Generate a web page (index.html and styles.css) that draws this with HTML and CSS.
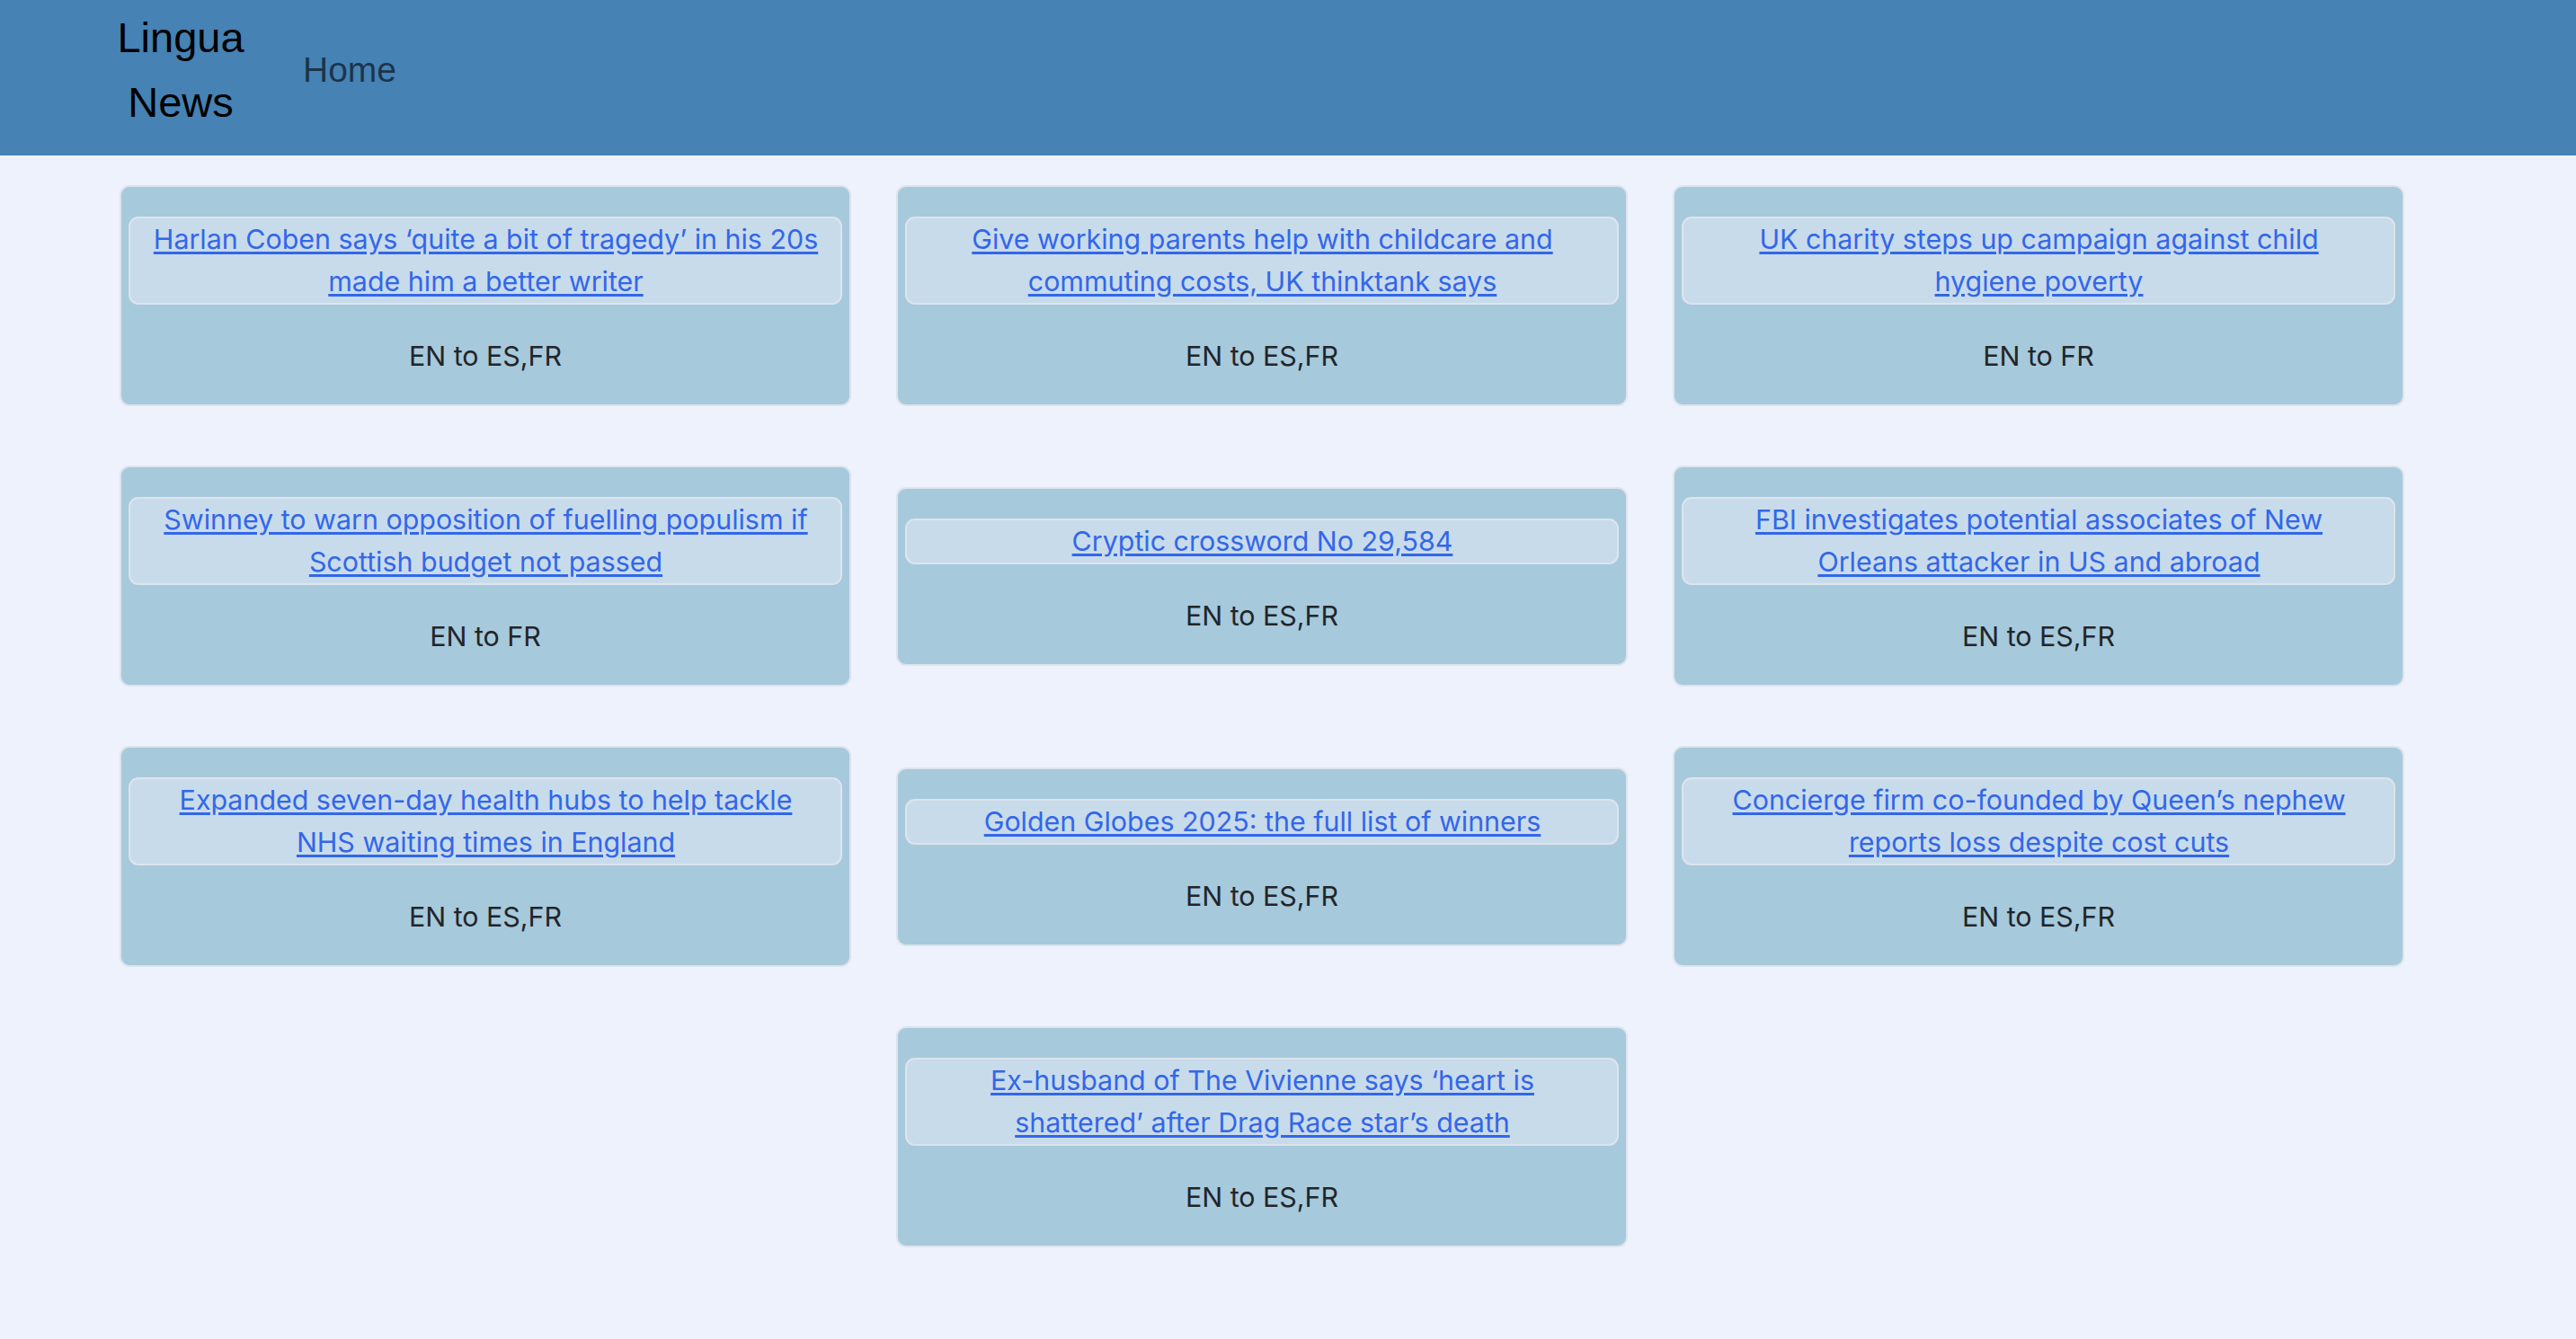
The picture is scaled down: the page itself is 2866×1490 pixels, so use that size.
FILE: index.html
```html
<!DOCTYPE html>
<html lang="en">
<head>
<meta charset="utf-8">
<title>Lingua News</title>
<link rel="stylesheet" href="styles.css">
</head>
<body>
<header class="topbar">
  <div class="brand">Lingua News</div>
  <nav class="nav"><a class="nav-link" href="#">Home</a></nav>
</header>
<main class="grid">
  <div class="card"><div class="title"><a href="#">Harlan Coben says ‘quite a bit of tragedy’ in his 20s made him a better writer</a></div><p class="langs">EN to ES,FR</p></div>
  <div class="card"><div class="title"><a href="#">Give working parents help with childcare and commuting costs, UK thinktank says</a></div><p class="langs">EN to ES,FR</p></div>
  <div class="card"><div class="title"><a href="#">UK charity steps up campaign against child hygiene poverty</a></div><p class="langs">EN to FR</p></div>
  <div class="card"><div class="title"><a href="#">Swinney to warn opposition of fuelling populism if Scottish budget not passed</a></div><p class="langs">EN to FR</p></div>
  <div class="card"><div class="title"><a href="#">Cryptic crossword No 29,584</a></div><p class="langs">EN to ES,FR</p></div>
  <div class="card"><div class="title"><a href="#">FBI investigates potential associates of New Orleans attacker in US and abroad</a></div><p class="langs">EN to ES,FR</p></div>
  <div class="card"><div class="title"><a href="#">Expanded seven-day health hubs to help tackle NHS waiting times in England</a></div><p class="langs">EN to ES,FR</p></div>
  <div class="card"><div class="title"><a href="#">Golden Globes 2025: the full list of winners</a></div><p class="langs">EN to ES,FR</p></div>
  <div class="card"><div class="title"><a href="#">Concierge firm co-founded by Queen’s nephew reports loss despite cost cuts</a></div><p class="langs">EN to ES,FR</p></div>
  <div class="card"><div class="title"><a href="#">Ex-husband of The Vivienne says ‘heart is shattered’ after Drag Race star’s death</a></div><p class="langs">EN to ES,FR</p></div>
</main>
</body>
</html>
```
FILE: styles.css
```css
html, body {
  margin: 0;
  padding: 0;
}
body {
  background: #eef2fc;
  font-family: Inter, "Noto Sans", sans-serif;
  color: #212529;
}
.topbar {
  background: #4682b4;
  height: 173px;
  display: flex;
  align-items: flex-start;
  box-sizing: border-box;
}
.brand {
  width: 160px;
  margin-left: 121px;
  padding-top: 6px;
  text-align: center;
  font-family: "Liberation Sans", Arial, sans-serif;
  font-size: 47px;
  line-height: 72px;
  color: #000;
}
.nav {
  margin-left: 56px;
  padding-top: 54px;
}
.nav-link {
  font-family: "Liberation Sans", Arial, sans-serif;
  font-size: 39px;
  line-height: 48px;
  color: rgba(0, 0, 0, 0.6);
  text-decoration: none;
}
.grid {
  display: flex;
  flex-wrap: wrap;
  justify-content: center;
  align-items: center;
  width: 2542px;
  margin-left: 133px;
  padding-top: 33px;
  column-gap: 50px;
  row-gap: 66px;
}
.card {
  width: 814px;
  box-sizing: border-box;
  background: #a7c9dc;
  border: 2px solid #dde3ec;
  border-radius: 11px;
  padding: 33px 8px 30px;
  display: flex;
  flex-direction: column;
  gap: 34px;
  text-align: center;
  font-size: 30.4px;
  line-height: 47px;
}
.title {
  background: #c8dbea;
  border: 2px solid #dde4ee;
  border-radius: 11px;
  padding: 0 24px 0 25px;
}
.title a {
  color: #3267ea;
  text-decoration: underline;
  text-underline-offset: 3px;
}
.langs {
  margin: 0;
  color: #212529;
}
```
